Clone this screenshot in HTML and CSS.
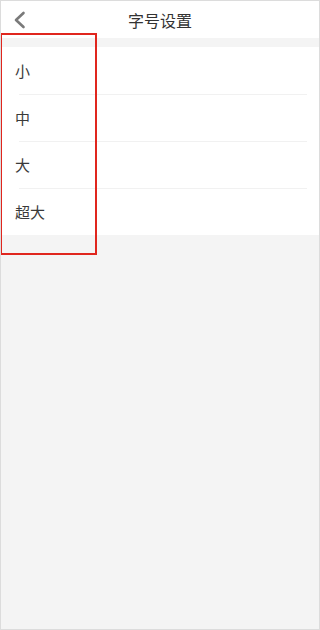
FILE: index.html
```html
<!DOCTYPE html>
<html lang="zh">
<head>
<meta charset="utf-8">
<link rel="stylesheet" href="styles.css">
</head>
<body>
<div class="screen">
  <header class="header">
    <span class="back">
      <svg width="13" height="18" viewBox="0 0 13 18"><path d="M10.5 2 L3 9 L10.5 16" fill="none" stroke="#7a7a7a" stroke-width="2.6" stroke-linecap="round" stroke-linejoin="round"/></svg>
    </span>
    <h1 class="title">字号设置</h1>
  </header>
  <div class="gap"></div>
  <ul class="list">
    <li class="item">小</li>
    <li class="item">中</li>
    <li class="item">大</li>
    <li class="item">超大</li>
  </ul>
  <div class="highlight"></div>
</div>
</body>
</html>
```
FILE: styles.css
```css
html, body {
  margin: 0;
  padding: 0;
}
body {
  font-family: "Noto Sans CJK SC", "Noto Sans", sans-serif;
  background: #f4f4f4;
}
.screen {
  position: relative;
  width: 320px;
  height: 630px;
  box-sizing: border-box;
  border: 1px solid #dcdcdc;
  background: #f4f4f4;
  overflow: hidden;
}
.header {
  position: relative;
  height: 37px;
  background: #fff;
  display: flex;
  align-items: center;
  justify-content: center;
}
.back {
  position: absolute;
  left: 12px;
  top: 10px;
  display: flex;
}
.title {
  margin: 0;
  font-size: 16px;
  font-weight: 400;
  color: #333;
  line-height: 1;
}
.gap {
  height: 9px;
  background: #f4f4f4;
}
.list {
  list-style: none;
  margin: 0;
  padding: 0 0 0 1px;
  background: #fff;
}
.item {
  height: 47px;
  box-sizing: border-box;
  display: flex;
  align-items: center;
  padding-left: 13px;
  font-size: 15px;
  color: #3a3a3a;
  position: relative;
}
.item + .item::before {
  content: "";
  position: absolute;
  top: 0;
  left: 17px;
  right: 12px;
  height: 1px;
  background: #f1f1f1;
}
.highlight {
  position: absolute;
  left: -1px;
  top: 32px;
  width: 97px;
  height: 222px;
  box-sizing: border-box;
  border: 2px solid #e0261e;
}
```
